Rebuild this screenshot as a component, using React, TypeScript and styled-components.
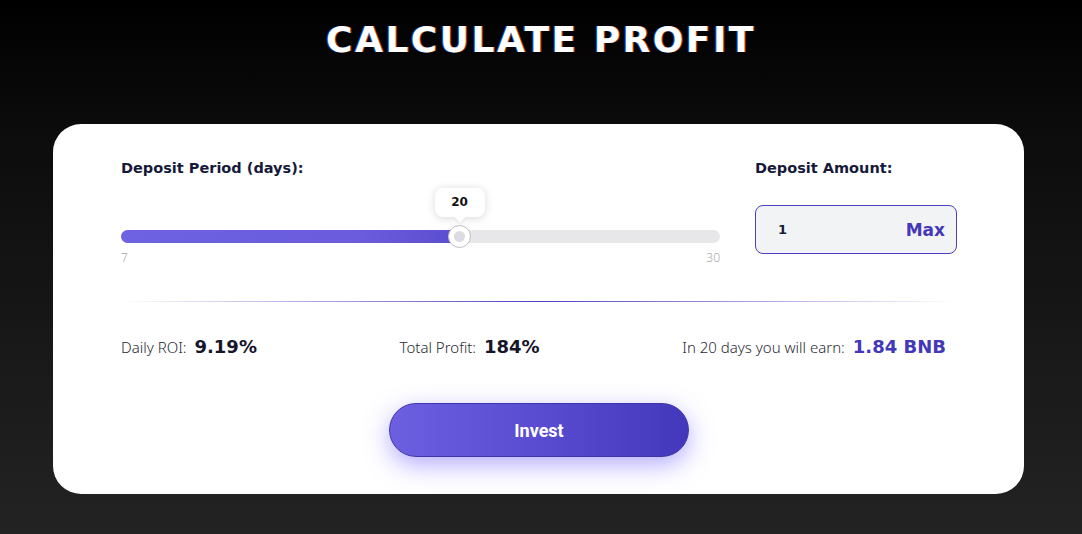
import React, { useState } from 'react'
import styled, { createGlobalStyle } from 'styled-components'

const MIN_DAYS = 7
const MAX_DAYS = 30
const DAILY_ROI = 9.19

export default function App() {
  const [days] = useState(20)
  const [amount, setAmount] = useState('1')

  const percent = ((days - MIN_DAYS) / (MAX_DAYS - MIN_DAYS)) * 100
  const totalProfit = Math.round(DAILY_ROI * days)
  const earn = ((Number(amount) || 0) * totalProfit / 100).toFixed(2)

  return (
    <Page>
      <GlobalStyle />
      <Title>CALCULATE PROFIT</Title>
      <Card>
        <TopRow>
          <Column>
            <Label>Deposit Period (days):</Label>
            <SliderWrap>
              <Track>
                <Fill style={{ width: `${percent}%` }} />
                <Thumb style={{ left: `${percent}%` }}>
                  <Bubble>{days}</Bubble>
                </Thumb>
              </Track>
              <Bounds>
                <span>{MIN_DAYS}</span>
                <span>{MAX_DAYS}</span>
              </Bounds>
            </SliderWrap>
          </Column>
          <Column>
            <Label>Deposit Amount:</Label>
            <AmountBox>
              <AmountInput
                value={amount}
                onChange={e => setAmount(e.target.value)}
              />
              <MaxButton>Max</MaxButton>
            </AmountBox>
          </Column>
        </TopRow>
        <Divider />
        <Stats>
          <Stat>
            <StatLabel>Daily ROI:</StatLabel>
            <StatValue>{DAILY_ROI}%</StatValue>
          </Stat>
          <Stat>
            <StatLabel>Total Profit:</StatLabel>
            <StatValue>{totalProfit}%</StatValue>
          </Stat>
          <Stat>
            <StatLabel>In {days} days you will earn:</StatLabel>
            <StatValue accent>{earn} BNB</StatValue>
          </Stat>
        </Stats>
        <ButtonRow>
          <InvestButton>Invest</InvestButton>
        </ButtonRow>
      </Card>
    </Page>
  )
}

const GlobalStyle = createGlobalStyle`
  * {
    box-sizing: border-box;
  }
  body {
    margin: 0;
    background: #000;
    font-family: 'DejaVu Sans', 'Noto Sans', sans-serif;
  }
`

const Page = styled.div`
  min-height: 534px;
  padding-top: 18px;
  overflow: hidden;
  background: linear-gradient(180deg, #000 0%, #0c0c0c 25%, #232323 100%);
`

const Title = styled.h1`
  margin: 0;
  text-align: center;
  color: #fff;
  font-size: 36px;
  line-height: 44px;
  font-weight: 700;
  letter-spacing: 2.5px;
  text-shadow: -1px 0 rgba(0, 110, 255, 0.7), 1px 0 rgba(255, 80, 0, 0.7);
`

const Card = styled.div`
  width: 971px;
  margin: 62px 0 0 53px;
  padding: 34px 67px 37px 68px;
  background: #fff;
  border-radius: 28px;
`

const TopRow = styled.div`
  display: grid;
  grid-template-columns: 1fr 202px;
  column-gap: 35px;
  align-items: start;
`

const Column = styled.div`
  display: flex;
  flex-direction: column;
`

const Label = styled.div`
  color: #161a3a;
  font-size: 14.5px;
  line-height: 20px;
  font-weight: 700;
`

const SliderWrap = styled.div`
  padding-top: 52px;
`

const Track = styled.div`
  position: relative;
  height: 13px;
  border-radius: 7px;
  background: #e7e7ea;
`

const Fill = styled.div`
  height: 100%;
  border-radius: 7px;
  background: linear-gradient(90deg, #6e62e2 0%, #6a5cdc 70%, #5b4dcf 100%);
`

const Thumb = styled.div`
  position: absolute;
  top: 50%;
  width: 23px;
  height: 23px;
  margin: -11.5px 0 0 -11.5px;
  border-radius: 50%;
  background: #fff;
  border: 1px solid #bdbdc4;
  &::after {
    content: '';
    position: absolute;
    top: 50%;
    left: 50%;
    width: 11px;
    height: 11px;
    margin: -5.5px 0 0 -5.5px;
    border-radius: 50%;
    background: #dcdce0;
  }
`

const Bubble = styled.div`
  position: absolute;
  bottom: 30px;
  left: 50%;
  transform: translateX(-50%);
  width: 50px;
  height: 29px;
  border-radius: 8px;
  background: #fff;
  box-shadow: 0 1px 8px rgba(0, 0, 0, 0.16);
  color: #111;
  font-size: 12px;
  font-weight: 700;
  line-height: 29px;
  text-align: center;
  &::after {
    content: '';
    position: absolute;
    left: 50%;
    bottom: -4px;
    width: 8px;
    height: 8px;
    margin-left: -4px;
    background: #fff;
    transform: rotate(45deg);
    box-shadow: 2px 2px 3px rgba(0, 0, 0, 0.05);
  }
`

const Bounds = styled.div`
  display: flex;
  justify-content: space-between;
  margin-top: 8px;
  color: #a9a9ae;
  font-family: 'Noto Sans', sans-serif;
  font-size: 12px;
  line-height: 14px;
  font-weight: 300;
`

const AmountBox = styled.div`
  display: flex;
  align-items: center;
  height: 49px;
  margin-top: 27px;
  padding: 0 11px 0 20px;
  border: 1px solid #4b3fc4;
  border-radius: 8px;
  background: #f2f3f5;
`

const AmountInput = styled.input`
  flex: 1;
  min-width: 0;
  border: 0;
  outline: 0;
  background: transparent;
  color: #161a3a;
  font-family: inherit;
  font-size: 13px;
  font-weight: 700;
`

const MaxButton = styled.span`
  color: #4338b8;
  font-size: 17px;
  font-weight: 700;
  cursor: pointer;
`

const Divider = styled.div`
  height: 1px;
  margin: 36px 0 0;
  background: linear-gradient(90deg, rgba(75, 63, 196, 0) 0%, #4b3fc4 50%, rgba(75, 63, 196, 0) 100%);
`

const Stats = styled.div`
  display: flex;
  justify-content: space-between;
  align-items: baseline;
  margin-top: 33px;
  padding-right: 11px;
  line-height: 24px;
`

const Stat = styled.div`
  display: flex;
  align-items: baseline;
  gap: 8px;
`

const StatLabel = styled.span`
  color: #2a2a35;
  font-family: 'Noto Sans', sans-serif;
  font-size: 15px;
  font-weight: 300;
`

const StatValue = styled.span<{ accent?: boolean }>`
  color: ${p => (p.accent ? '#4338b8' : '#16162b')};
  font-size: 18px;
  font-weight: 700;
`

const ButtonRow = styled.div`
  display: flex;
  justify-content: center;
  margin-top: 44px;
`

const InvestButton = styled.button`
  width: 300px;
  height: 54px;
  border: 1px solid #4035a8;
  border-radius: 27px;
  background: linear-gradient(90deg, #6c5fe0 0%, #5a4cd0 50%, #4337bb 100%);
  box-shadow: 0 8px 24px rgba(108, 92, 255, 0.5);
  color: #fff;
  font-family: Roboto, 'Noto Sans', sans-serif;
  font-size: 18px;
  font-weight: 700;
  cursor: pointer;
`
